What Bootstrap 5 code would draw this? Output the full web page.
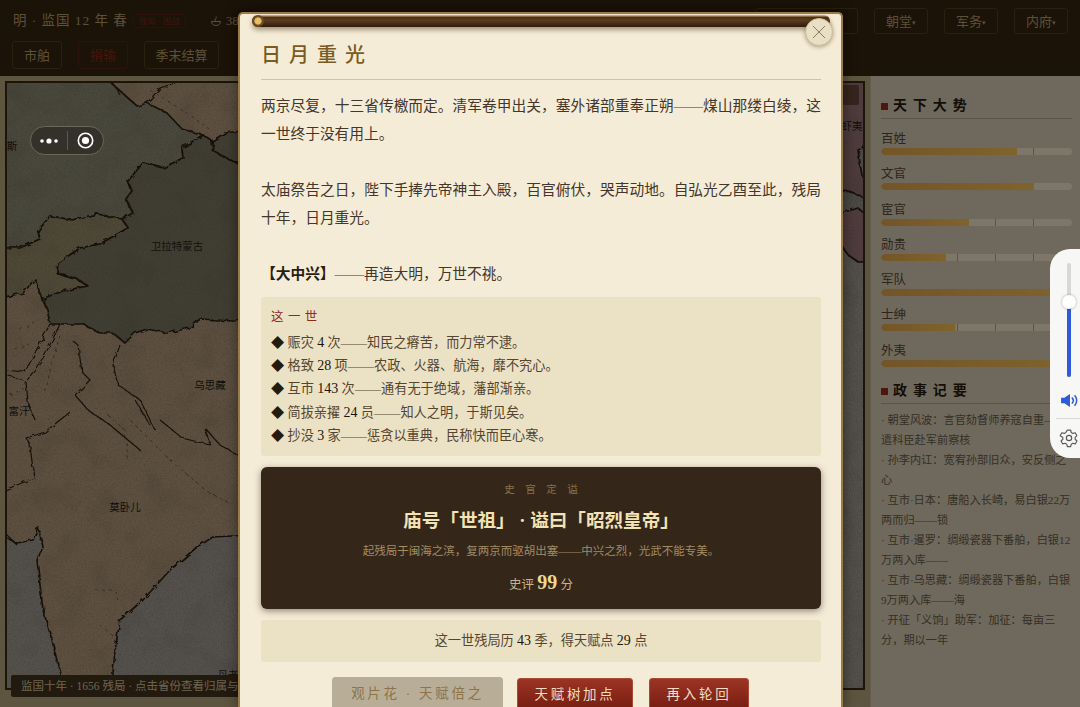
<!DOCTYPE html>
<html lang="zh">
<head>
<meta charset="utf-8">
<title>日月重光</title>
<link href="https://cdn.jsdelivr.net/npm/bootstrap@5.3.2/dist/css/bootstrap.min.css" rel="stylesheet">
<style>
  html, body { height: 100%; }
  body {
    width: 1080px; height: 707px; overflow: hidden; position: relative;
    font-family: "Liberation Serif", "Noto Sans CJK SC", serif;
    background: #362410; color: #2e2216;
  }
  .game-page { height: 707px; }
  .top-bar { height: 76px; padding: 8px 12px 7px 13px; background: #362410; flex: none; }
  .top-row { height: 26px; }
  .top-row2 { height: 28px; margin-top: 7px; margin-left: -1px; }
  .reign { font-size: 13.5px; letter-spacing: .07em; color: #b8a070; }
  .reign-tag { font-size: 8.5px; color: #7c2e1c; border: 1px solid #5a2416; border-radius: 3px; padding: 0 5px; margin-left: 5px; }
  .treasury { font-size: 13px; color: #b8a070; margin-left: 24px; }
  .top-btn {
    font-size: 13px; line-height: 1; color: #b8a070; background: transparent; padding: 0;
    border: 1px solid #54401f; border-radius: 3px; height: 100%;
  }
  .btn-w54 { width: 54px; }
  .btn-w50 { width: 50px; }
  .btn-w75 { width: 75px; }
  .btn-w103 { width: 103px; }
  .top-btn.is-red { color: #8c2c1a; border-color: #5a2416; }
  .caret-mark { font-size: 7px; vertical-align: 1px; }
  .main-area { height: 631px; }
  .map-col { width: 870px; padding: 5px 5px 17px 5px; background: #bcaa80; position: relative; flex: none; }
  .map-frame { width: 860px; height: 609px; border: 2px solid #3a2a14; position: relative; }
  .map-frame svg { display: block; }
  .map-caption {
    position: absolute; left: 4px; bottom: -9px; width: 480px; height: 22px; line-height: 22px;
    padding-left: 10px; font-size: 11.5px; color: #d8c8a4; background: #46341f; border-radius: 2px; white-space: nowrap;
  }
  .map-chip { position: absolute; right: 4px; top: 2px; height: 20px; width: 50px; background: #6a4a3c; border-radius: 2px; }
  .side-col { width: 210px; padding: 19px 8px 0 10px; background: #dfd2ba; border-left: 1px solid #cbbd9f; flex: none; }
  .side-title {
    font-size: 14px; font-weight: 700; letter-spacing: .42em; color: #2a1c0e; line-height: 22px;
    padding-bottom: 1px; border-bottom: 1px solid #b5a68c; margin-bottom: 12px;
  }
  .side-title::before { content: ""; display: inline-block; width: 7px; height: 7px; margin-right: 5px; background: #a02a18; vertical-align: 0; }
  .stat-row { height: 35.3px; }
  .stat-name { font-size: 12.5px; line-height: 17px; color: #5a4a34; display: block; }
  .stat-bar.progress {
    height: 7px; border-radius: 4px; margin-top: 0;
    background-color: #fcecd0;
    background-image: linear-gradient(90deg, transparent 39.8%, #b8a888 39.8%, #b8a888 40.3%, transparent 40.3%, transparent 59.8%, #b8a888 59.8%, #b8a888 60.3%, transparent 60.3%, transparent 79.8%, #b8a888 79.8%, #b8a888 80.3%, transparent 80.3%);
  }
  .stat-bar .progress-bar { background: linear-gradient(90deg, #e6aa50, #ffc85a); border-radius: 4px 0 0 4px; }
  .log-block { margin-top: 2px; }
  .log-block .side-title { margin-bottom: 6px; }
  .log-line { font-size: 11.2px; line-height: 20px; color: #6c5e48; margin: 0; }
  .veil { position: absolute; inset: 0; background: rgba(0,0,0,.5); }

  .scroll-modal {
    position: absolute; left: 238px; top: 12px; width: 605px; padding: 22px 20px 0 21px;
    background: #f5ecd8; border: 2px solid #9a7c48; border-bottom: 0; border-radius: 5px 5px 0 0;
    box-shadow: 0 0 14px rgba(0,0,0,.45);
  }
  .roller {
    position: absolute; left: 12px; right: 11px; top: 1px; height: 12px; border-radius: 6px;
    background: linear-gradient(180deg, #c4a878 0, #c4a878 1px, #4a2e14 2px, #5c3c1e 45%, #2e1c0c 100%);
    box-shadow: 0 3px 5px rgba(70,40,10,.45);
  }
  .roller::before {
    content: ""; position: absolute; left: 0; top: 0; width: 12px; height: 12px; border-radius: 50%;
    background: radial-gradient(circle, #eac76e 0, #e0b85c 38%, #6a4a24 48%, #6a4a24 100%);
  }
  .close-round {
    position: absolute; right: 8px; top: 4px; width: 28px; height: 28px; padding: 0; border-radius: 50%;
    background: #e9dfc4; border: 1px solid #cdbd96; box-shadow: 0 1px 4px rgba(60,40,10,.4);
  }
  .scroll-title {
    font-size: 20px; line-height: 38px; font-weight: 500; letter-spacing: .4em; color: #7a5c22; margin: 0;
    padding-bottom: 5px; border-bottom: 1px solid #cfc3a6; margin-bottom: 12px;
  }
  .story { font-size: 14.72px; line-height: 28px; margin: 0 0 28px; color: #43362a; text-align: justify; }
  .story.last-story { margin-bottom: 9px; }
  .story b { font-weight: 700; color: #2a1e10; }
  .life-box { background: #ebe2c6; border-radius: 3px; padding: 10px 10px 9px; }
  .life-head { font-size: 12.5px; letter-spacing: .35em; color: #8e2c1a; line-height: 20px; margin-bottom: 4px; }
  .life-item { font-size: 13.2px; line-height: 23.2px; color: #55452f; margin: 0; }
  .life-item b { font-weight: 400; font-size: 14px; color: #1e150a; }
  .life-item i { font-style: normal; color: #241a0e; }
  .verdict.card {
    background: #35261a; border: 0; border-radius: 6px; height: 142px; margin-top: 11px;
    box-shadow: 0 2px 7px rgba(50,30,10,.5);
  }
  .verdict-over { font-size: 10.5px; letter-spacing: 1em; color: #8a7048; line-height: 14px; margin-top: 16px; padding-left: 1em; }
  .verdict-name { font-size: 18.6px; font-weight: 700; color: #f2e2b4; line-height: 26px; margin-top: 11px; }
  .verdict-note { font-size: 11.5px; color: #a28c64; line-height: 18px; margin-top: 8px; }
  .verdict-score { font-size: 12.5px; color: #c8b488; line-height: 28px; margin-top: 8px; }
  .verdict-score b { font-size: 20px; font-weight: 700; color: #f0d890; }
  .talent-box { background: #ebe2c6; border-radius: 3px; height: 42px; line-height: 42px; margin-top: 11px; font-size: 13.2px; color: #55452f; text-align: center; }
  .talent-box b { font-weight: 400; font-size: 14px; color: #1e150a; }
  .end-btns { margin-top: 15px; height: 34px; padding-right: 1px; }
  .end-btn { font-size: 13.5px; letter-spacing: .2em; padding: 0; height: 34px; border-radius: 3px; color: #f0dfc0; border: 1px solid #a84a34; background: linear-gradient(180deg, #9c3424, #741c10); margin-top: 1px; }
  .end-btn.is-off { margin-top: 0; margin-right: -2px; color: #8c7448; background: #b8ae98; border-color: #b8ae98; }
  .btn-w171 { width: 171px; }
  .btn-w116 { width: 116px; }
  .btn-w100 { width: 100px; }

  .capsule {
    position: absolute; left: 30px; top: 126px; width: 74px; height: 29px; border-radius: 15px;
    background: #33312a; border: 1px solid #6a6858;
  }
  .capsule-sep { width: 1px; height: 19px; background: #5a5a4c; }
  .volume-panel {
    position: absolute; left: 1050px; top: 249px; width: 40px; height: 209px; border-radius: 20px 0 0 20px;
    background: #f7f7f5;
  }
  .vol-rail { position: relative; width: 4px; height: 114px; margin: 14px 0 0 17px; background: #d8d8d6; border-radius: 2px; }
  .vol-fill { position: absolute; left: 0; right: 0; bottom: 0; height: 70px; background: #2f5bd8; border-radius: 2px; }
  .vol-knob { position: absolute; left: -5px; top: 32px; width: 14px; height: 14px; border-radius: 50%; background: #fff; box-shadow: 0 0 3px rgba(0,0,0,.3); }
  .vol-rule { height: 1px; background: #d8d8d6; margin: 10px 0 0 6px; }
  .vol-sound { margin: 16px 0 0 10px; }
  .vol-gear { margin: 9px 0 0 9px; }
</style>
</head>
<body>

<div class="game-page d-flex flex-column">
  <div class="top-bar">
    <div class="top-row d-flex align-items-center">
      <span class="reign">明 · 监国 12 年 春</span>
      <span class="reign-tag">残局 · 困战</span>
      <span class="treasury d-flex align-items-center gap-1">
        <svg width="12" height="12" viewBox="0 0 12 12" fill="none" stroke="#b8a070" stroke-width="1"><path d="M1.5 6.5h9c0 2.5-2 4-4.5 4s-4.500-1.500-4.500-4zM6 6.500c-1.500-1-1.500-2.500 0-3 .5-.3 .5-1 0-2"/></svg>
        38
      </span>
      <div class="ms-auto d-flex gap-3 h-100">
        <button class="btn top-btn btn-w103"></button>
        <button class="btn top-btn btn-w54">朝堂<span class="caret-mark">▾</span></button>
        <button class="btn top-btn btn-w54">军务<span class="caret-mark">▾</span></button>
        <button class="btn top-btn btn-w54">内府<span class="caret-mark">▾</span></button>
      </div>
    </div>
    <div class="top-row2 d-flex gap-3">
      <button class="btn top-btn btn-w50">市舶</button>
      <button class="btn top-btn btn-w50 is-red">捐输</button>
      <button class="btn top-btn btn-w75">季末结算</button>
    </div>
  </div>

  <div class="main-area d-flex">
    <div class="map-col">
      <div class="map-frame">
        <svg width="856" height="605" viewBox="7 83 856 605" xmlns="http://www.w3.org/2000/svg">
          <defs>
            <filter id="rough" x="-5%" y="-5%" width="110%" height="110%">
              <feTurbulence type="fractalNoise" baseFrequency=".16" numOctaves="2" seed="4"/>
              <feDisplacementMap in="SourceGraphic" scale="5"/>
            </filter>
            <filter id="grain" x="0" y="0" width="100%" height="100%">
              <feTurbulence type="fractalNoise" baseFrequency=".75" numOctaves="3" seed="9"/>
              <feColorMatrix values="0 0 0 0 .1  0 0 0 0 .08  0 0 0 0 .05  0 0 0 1.6 -.62"/>
            </filter>
            <filter id="blotch" x="0" y="0" width="100%" height="100%">
              <feTurbulence type="fractalNoise" baseFrequency=".035" numOctaves="4" seed="21"/>
              <feColorMatrix values="0 0 0 0 .12  0 0 0 0 .09  0 0 0 0 .05  0 0 0 1.3 -.6"/>
            </filter>
          </defs>
          <rect x="0" y="80" width="870" height="612" fill="#bda284"/>
          <g filter="url(#rough)" stroke="#2a1c0e" stroke-width="1.700" stroke-linejoin="round">
            <polygon fill="#94927a" points="0,80 108,80 137,106 147,103 167,113 182,129 203,135 182,148 183,158 163,168 143,163 128,181 132,191 126,199 133,213 122,219 97,214 72,220 50,216 38,231 40,239 20,248 0,248"/>
            <polygon fill="#9e9370" points="0,248 20,248 40,239 38,231 50,216 72,220 97,214 122,219 128,228 100,244 80,248 58,263 57,273 77,279 88,286 63,291 42,299 35,279 23,293 0,298"/>
            <polygon fill="#827e68" points="203,135 212,141 213,151 233,161 250,170 250,320 233,321 200,319 190,328 167,333 147,329 135,333 125,343 113,333 100,333 83,324 50,324 47,309 42,299 63,291 88,286 77,279 57,273 58,263 80,248 100,244 128,228 122,219 133,213 126,199 132,191 128,181 143,163 163,168 183,158 182,148"/>
            <polygon fill="#827e68" points="212,141 225,133 250,130 250,165 233,161 213,151"/>
            <polygon fill="#aaa49c" points="0,535 17,543 33,540 38,527 43,547 37,560 43,610 52,640 60,673 60,695 0,695"/>
            <polygon fill="#aaa49c" points="113,673 115,650 120,620 143,600 170,570 197,547 213,537 250,535 300,640 300,700 113,700"/>
            <polygon fill="#a27a80" points="840,75 875,75 875,262 858,262 848,255 830,230 830,75"/>
            <polygon fill="#9a9490" points="830,200 845,190 860,196 875,205 875,222 858,208 845,212 830,220"/>
            <polygon fill="#aaa49c" points="830,230 848,255 858,262 875,262 875,700 830,700"/>
            <polygon fill="#9a9490" points="858,150 866,146 875,150 875,178 862,176"/>
          </g>
          <g filter="url(#rough)" fill="none" stroke="#2a1c0e" stroke-width="1.200">
            <path d="M113,83 L120,95"/>
            <path d="M147,103 L160,88 L175,83"/>
            <path d="M5,370 L25,372 L50,324 M60,324 L45,355 L26,382 L28,402 L35,420"/>
            <path d="M72,340 L78,345 L82,372 L90,380 L75,395 L88,410 L110,425 L140,450"/>
            <path d="M120,345 L113,365 L118,385 L140,400 L155,430"/>
            <path d="M5,490 L24,482 L34,478 L30,445 L26,438 L45,432 L70,412"/>
            <path d="M5,375 L24,380"/>
            <path d="M135,400 L150,425"/>
            <path d="M5,533 L17,545"/>
            <path d="M160,420 L182,438 L210,445 L205,428 L220,445 L238,455"/>
          </g>
          <g filter="url(#rough)" fill="none" stroke="#3c2e1e" stroke-width="1" stroke-dasharray="3 4" opacity=".6">
            <path d="M150,90 L190,115 L210,130"/>
            <path d="M60,335 L50,370 L45,395"/>
            <path d="M20,330 L34,322 M15,350 L30,345 M10,395 L25,388"/>
            <path d="M108,415 L125,430 L128,460 M130,420 L150,440 L175,465 M165,455 L205,490 L232,505"/>
            <path d="M95,590 L115,590 L118,600 M100,625 L118,640"/>
          </g>
          <rect x="0" y="80" width="870" height="612" filter="url(#blotch)" opacity=".3"/>
          <rect x="0" y="80" width="870" height="612" filter="url(#grain)" opacity=".4"/>
          <g font-family="'Liberation Serif','Noto Sans CJK SC',serif" font-size="10.500" fill="#221a10" text-anchor="middle">
            <text x="12" y="150">斯</text>
            <text x="177" y="250" fill="#2a2418">卫拉特蒙古</text>
            <text x="210" y="389">乌思藏</text>
            <text x="19" y="415">富汗</text>
            <text x="125" y="511">莫卧儿</text>
            <text x="228" y="679">丹老</text>
            <text x="852" y="130">虾夷</text>
          </g>
        </svg>
        <div class="map-chip"></div>
        <div class="map-caption">监国十年 · 1656 残局 · 点击省份查看归属与</div>
      </div>
    </div>

    <div class="side-col">
      <div class="side-title">天下大势</div>
      <div class="stat-row"><span class="stat-name">百姓</span><div class="progress stat-bar"><div class="progress-bar" style="width:71%"></div></div></div>
      <div class="stat-row"><span class="stat-name">文官</span><div class="progress stat-bar"><div class="progress-bar" style="width:80%"></div></div></div>
      <div class="stat-row"><span class="stat-name">宦官</span><div class="progress stat-bar"><div class="progress-bar" style="width:46%"></div></div></div>
      <div class="stat-row"><span class="stat-name">勋贵</span><div class="progress stat-bar"><div class="progress-bar" style="width:34%"></div></div></div>
      <div class="stat-row"><span class="stat-name">军队</span><div class="progress stat-bar"><div class="progress-bar" style="width:100%"></div></div></div>
      <div class="stat-row"><span class="stat-name">士绅</span><div class="progress stat-bar"><div class="progress-bar" style="width:39%"></div></div></div>
      <div class="stat-row"><span class="stat-name">外夷</span><div class="progress stat-bar"><div class="progress-bar" style="width:100%"></div></div></div>
      <div class="log-block">
        <div class="side-title">政事记要</div>
        <p class="log-line">· 朝堂风波：言官劾督师养寇自重——遣科臣赴军前察核</p>
        <p class="log-line">· 孙李内讧：宽宥孙部旧众，安反侧之心</p>
        <p class="log-line">· 互市·日本：唐船入长崎，易白银22万两而归——锁</p>
        <p class="log-line">· 互市·暹罗：绸缎瓷器下番舶，白银12万两入库——</p>
        <p class="log-line">· 互市·乌思藏：绸缎瓷器下番舶，白银9万两入库——海</p>
        <p class="log-line">· 开征「义饷」助军：加征：每亩三分，期以一年</p>
      </div>
    </div>
  </div>
</div>

<div class="veil"></div>

<div class="scroll-modal">
  <div class="roller"></div>
  <button class="close-round d-flex align-items-center justify-content-center" aria-label="关闭">
    <svg width="14" height="14" viewBox="0 0 14 14" stroke="#8a7a5c" stroke-width="1"><path d="M1 1l12 12M13 1L1 13"/></svg>
  </button>
  <h2 class="scroll-title">日月重光</h2>
  <p class="story">两京尽复，十三省传檄而定。清军卷甲出关，塞外诸部重奉正朔——煤山那缕白绫，这一世终于没有用上。</p>
  <p class="story">太庙祭告之日，陛下手捧先帝神主入殿，百官俯伏，哭声动地。自弘光乙酉至此，残局十年，日月重光。</p>
  <p class="story last-story"><b>【大中兴】</b>——再造大明，万世不祧。</p>
  <div class="life-box">
    <div class="life-head">这一世</div>
    <p class="life-item"><i>◆</i> 赈灾 <b>4</b> 次——知民之瘠苦，而力常不逮。</p>
    <p class="life-item"><i>◆</i> 格致 <b>28</b> 项——农政、火器、航海，靡不究心。</p>
    <p class="life-item"><i>◆</i> 互市 <b>143</b> 次——通有无于绝域，藩部渐亲。</p>
    <p class="life-item"><i>◆</i> 简拔亲擢 <b>24</b> 员——知人之明，于斯见矣。</p>
    <p class="life-item"><i>◆</i> 抄没 <b>3</b> 家——惩贪以重典，民称快而臣心寒。</p>
  </div>
  <div class="card verdict text-center">
    <div class="verdict-over">史官定谥</div>
    <div class="verdict-name">庙号「世祖」 · 谥曰「昭烈皇帝」</div>
    <div class="verdict-note">起残局于闽海之滨，复两京而驱胡出塞——中兴之烈，光武不能专美。</div>
    <div class="verdict-score">史评 <b>99</b> 分</div>
  </div>
  <div class="talent-box">这一世残局历 <b>43</b> 季，得天赋点 <b>29</b> 点</div>
  <div class="end-btns d-flex justify-content-center gap-3">
    <button class="btn end-btn is-off btn-w171">观片花 · 天赋倍之</button>
    <button class="btn end-btn btn-w116">天赋树加点</button>
    <button class="btn end-btn btn-w100">再入轮回</button>
  </div>
</div>

<div class="capsule d-flex align-items-center">
  <span class="d-flex justify-content-center flex-fill">
    <svg width="18" height="6" viewBox="0 0 18 6" fill="#fff"><circle cx="2" cy="3" r="1.800"/><circle cx="9" cy="3" r="2.600"/><circle cx="16" cy="3" r="1.800"/></svg>
  </span>
  <span class="capsule-sep"></span>
  <span class="d-flex justify-content-center flex-fill">
    <svg width="17" height="17" viewBox="0 0 17 17"><circle cx="8.500" cy="8.500" r="7.200" fill="none" stroke="#fff" stroke-width="1.600"/><circle cx="8.500" cy="8.500" r="3.600" fill="#fff"/></svg>
  </span>
</div>

<div class="volume-panel">
  <div class="vol-rail"><div class="vol-fill"></div><div class="vol-knob"></div></div>
  <svg class="d-block vol-sound" width="19" height="15" viewBox="0 0 20 16" fill="none">
    <path d="M1 5h3.500L10.500 1v14L4.500 11H1z" fill="#2f5bd8"/>
    <path d="M13 5.300c1.200 1.500 1.200 3.900 0 5.400M15.800 3c2.400 2.900 2.400 7.100 0 10" stroke="#2f5bd8" stroke-width="1.700" stroke-linecap="round"/>
  </svg>
  <div class="vol-rule"></div>
  <svg class="d-block vol-gear" width="20" height="20" viewBox="0 0 24 24" fill="none" stroke="#5a5a5a" stroke-width="1.400" stroke-linejoin="round">
    <path d="M10 2.500h4l.7 2.900 1.900 1.100 2.900-.8 2 3.500-2.100 2.100v2.200l2.100 2.100-2 3.500-2.900-.8-1.900 1.100-.7 2.900h-4l-.7-2.900-1.900-1.100-2.900.8-2-3.500 2.100-2.100v-2.200L1.400 9.200l2-3.500 2.900.8 1.900-1.100z"/>
    <circle cx="12" cy="12" r="3.200"/>
  </svg>
</div>

<script src="https://cdn.jsdelivr.net/npm/bootstrap@5.3.2/dist/js/bootstrap.bundle.min.js"></script>
</body>
</html>
